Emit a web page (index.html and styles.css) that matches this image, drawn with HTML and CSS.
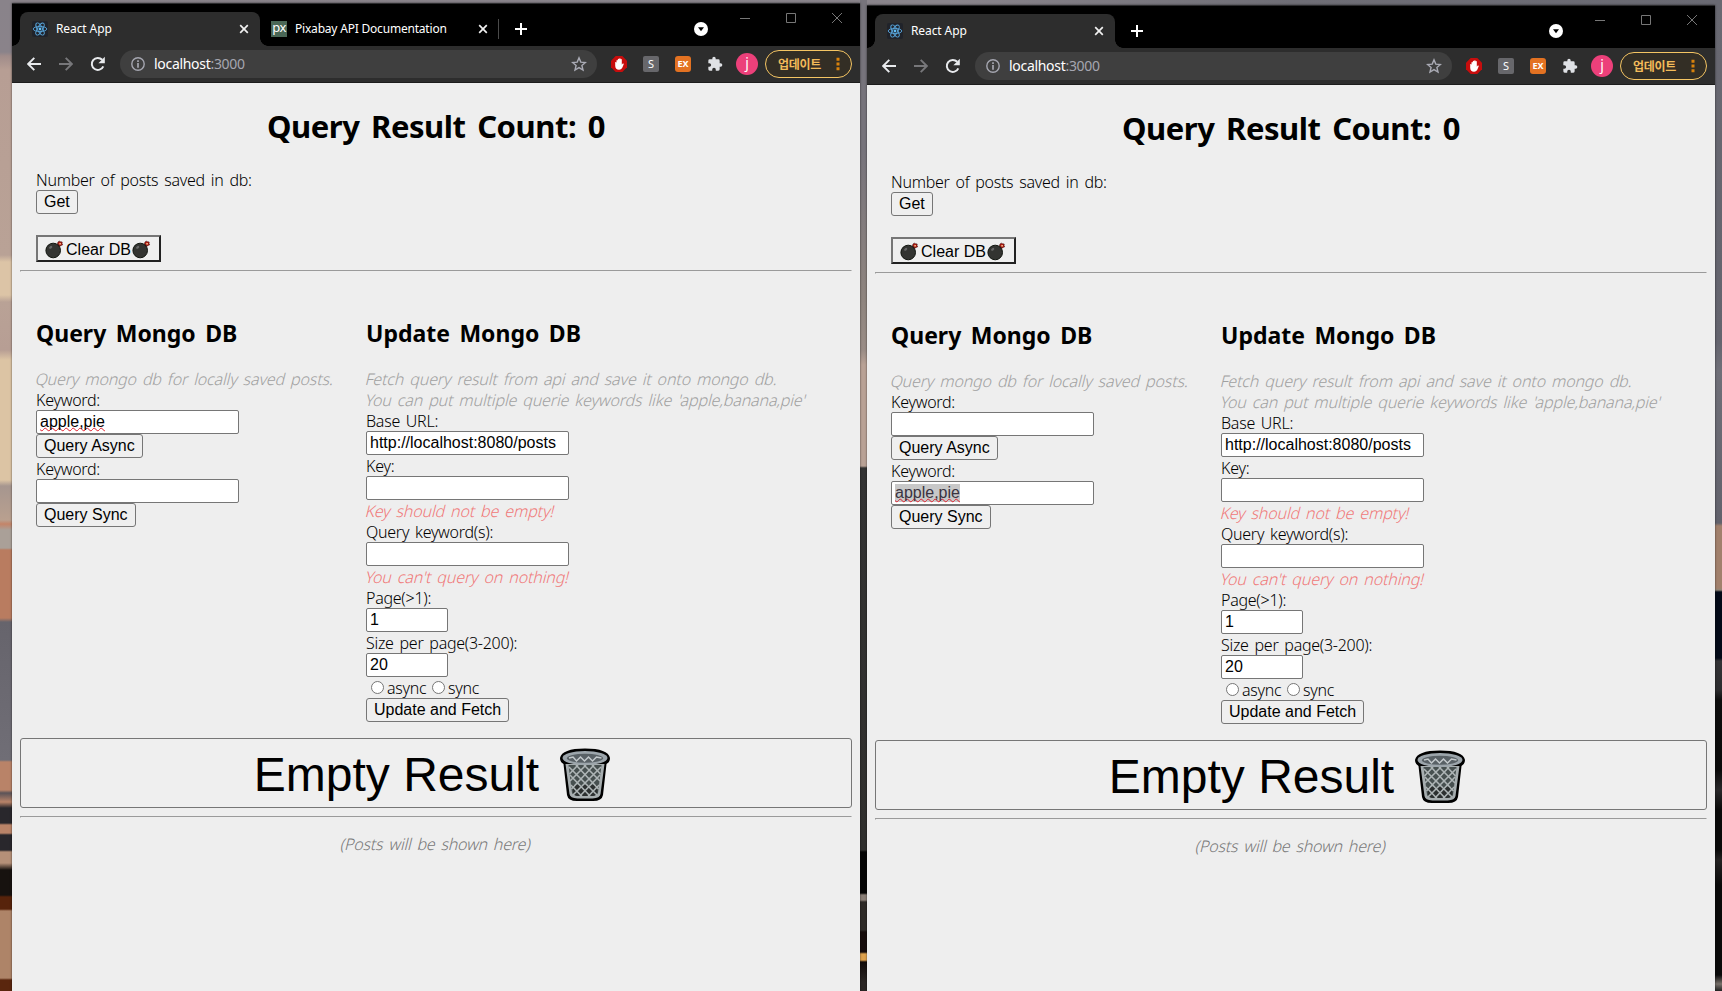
FILE: index.html
```html
<!DOCTYPE html>
<html lang="en">
<head>
<meta charset="utf-8">
<title>React App</title>
<link rel="stylesheet" href="styles.css">
</head>
<body>
<svg class="defs" width="0" height="0">
  <symbol id="react" viewBox="0 0 16 16"><rect width="16" height="16" rx="2" fill="#20232a"/><g fill="none" stroke="#58a6dc" stroke-width=".9"><ellipse cx="8" cy="8" rx="6.8" ry="2.6"/><ellipse cx="8" cy="8" rx="6.8" ry="2.6" transform="rotate(60 8 8)"/><ellipse cx="8" cy="8" rx="6.8" ry="2.6" transform="rotate(120 8 8)"/></g><circle cx="8" cy="8" r="1.4" fill="#61bdf5"/></symbol>
  <symbol id="x" viewBox="0 0 10 10"><path d="M1.2 1.2l7.6 7.6M8.8 1.2L1.2 8.8" stroke="#f1f1f1" stroke-width="1.7"/></symbol>
  <symbol id="plus" viewBox="0 0 12 12"><path d="M6 0v12M0 6h12" stroke="#fff" stroke-width="2"/></symbol>
  <symbol id="drop" viewBox="0 0 14 14"><circle cx="7" cy="7" r="7" fill="#fff"/><path d="M4 5.2h6L7 9.3z" fill="#000"/></symbol>
  <symbol id="back" viewBox="0 0 14 14"><path d="M14 7H1.5M7.3 .8L1.2 7l6.1 6.2" fill="none" stroke="currentColor" stroke-width="1.9"/></symbol>
  <symbol id="reload" viewBox="0 0 16 16"><path d="M13.3 10.3A6 6 0 1 1 12.2 3.8" fill="none" stroke="#e8eaed" stroke-width="2"/><path d="M14.8 .8v6.4H8.4z" fill="#e8eaed"/></symbol>
  <symbol id="info" viewBox="0 0 14 14"><circle cx="7" cy="7" r="6.2" fill="none" stroke="#a5a6b0" stroke-width="1.4"/><path d="M7 3.2v1.7M7 6.1v4.7" stroke="#a5a6b0" stroke-width="1.7"/></symbol>
  <symbol id="star" viewBox="0 0 16 16"><path d="M8 1.9l1.8 4.2 4.6.4-3.5 3 1.1 4.5L8 11.6 4 14l1.1-4.500L1.600 6.500l4.600-.4z" fill="none" stroke="#aaabb5" stroke-width="1.4"/></symbol>
  <symbol id="abp" viewBox="0 0 16 16"><path d="M4.7 0h6.600L16 4.700v6.600L11.300 16H4.700L0 11.300V4.700z" fill="#c70d0d"/><path d="M4.200 6.500v3.300c0 2.500 1.500 4 3.800 4 1.800 0 2.800-.9 3.500-2.500l1.300-3.200c.2-.7-.8-1-1.300-.3l-.7 1V3.600c0-.8-1.200-.8-1.200 0v-.8c0-.8-1.400-.8-1.400 0v.6c0-.8-1.400-.8-1.400 0v1.200c-.1-.8-1.300-.8-1.300 0v2.200c-.1-.9-1.300-.9-1.300-.3z" fill="#fff"/></symbol>
  <symbol id="puzzle" viewBox="0 0 24 24"><path d="M20.500 11H19V7a2 2 0 0 0-2-2h-4V3.500a2.500 2.500 0 0 0-5 0V5H4a2 2 0 0 0-2 2v3.800h1.500a2.700 2.700 0 0 1 0 5.400H2V20a2 2 0 0 0 2 2h3.800v-1.500a2.700 2.700 0 0 1 5.400 0V22H17a2 2 0 0 0 2-2v-4h1.500a2.500 2.500 0 0 0 0-5z" fill="#dfe1e5"/></symbol>
  <symbol id="dots" viewBox="0 0 4 14"><path d="M.5 .7h3v3h-3zM.5 5.500h3v3h-3zM.5 10.300h3v3h-3z" fill="#d9820c"/></symbol>
  <symbol id="bomb" viewBox="0 0 20 20"><path d="M11.500 7l3-3.500 1.500 1.500-2.500 3.500" fill="#555" stroke="#222" stroke-width=".8"/><circle cx="8.200" cy="11.500" r="7.300" fill="#333431" stroke="#11150f"/><ellipse cx="5.700" cy="8.300" rx="1.800" ry="1.200" fill="#666" transform="rotate(-40 5.700 8.300)"/><path d="M13 3l1.300-.8 1.200.6 1.700.2-.2 1.500.7 1.300-1.600.6-1.400.9-1-1.500-1.200-.8z" fill="#b51a12" stroke="#401010" stroke-width=".6"/><path d="M14.400 4h1.400v1.400h-1.400z" fill="#ffd6a0"/></symbol>
  <symbol id="bin" viewBox="0 0 52 55"><path d="M4.500 17L8 48q1 6 10 6h16q9 0 10-6l3.500-31q3.500-2 3.500-6Q49 1.500 26 1.500T1 11q0 4 3.500 6z" fill="#000"/><path d="M6.500 17L10.500 47q.5 4 8 4.500h15q7.500-.5 8-4.500l4-30z" fill="#a6adaf"/><path d="M9.500 18l3.500 28q1 2.500 6 3h14q5-.5 6-3l3.500-28z" fill="#475050"/><path d="M13 38l1.200 8q1 2.500 5 3h14q4-.5 5-3l1-8z" fill="#2c3030"/><path d="M10 20l28 28M17 18l22.500 24M25 18l16 16M33 18l8.500 9M11 28l20 21M12 38l11 11.500M42 20L14 48M35 18L12.500 42M27 18L11 34M19 18l-8.500 9M41 28L21 49M40 38L29 49.500" stroke="#adb4b5" stroke-width="1.600" fill="none"/><ellipse cx="26" cy="11" rx="22.500" ry="7" fill="#9ca5ab"/><ellipse cx="26" cy="11.300" rx="18" ry="4.500" fill="#596166"/><path d="M10 11l4-1 3.500 4 4-4 4 4 4-4 4 4 4-4 5 1" fill="none" stroke="#c3c9cc" stroke-width="1.500"/></symbol>
</svg>

<div class="wall left"></div><div class="wall middle"></div><div class="wall right"></div>

<section class="window first">
  <header class="tabs">
    <div class="tab active"><svg class="fav"><use href="#react"/></svg><span class="title">React App</span><svg class="close"><use href="#x"/></svg></div>
    <div class="tab second"><span class="px">px</span><span class="title pix">Pixabay API Documentation</span><svg class="close"><use href="#x"/></svg></div>
    <i class="sep"></i>
    <svg class="plus"><use href="#plus"/></svg>
    <div class="controls"><svg class="drop"><use href="#drop"/></svg><svg class="wc" viewBox="0 0 104 12"><path d="M1 6.500h10M47.500 1.500h9v9h-9zM93 1l10 10M103 1L93 11" fill="none" stroke="#777"/></svg></div>
  </header>
  <nav class="toolbar">
    <svg class="nav"><use href="#back"/></svg><svg class="nav fwd"><use href="#back"/></svg><svg class="reload"><use href="#reload"/></svg>
    <div class="url"><svg class="info"><use href="#info"/></svg><span class="host">localhost<span class="port">:3000</span></span><svg class="star"><use href="#star"/></svg></div>
    <div class="ext"><svg><use href="#abp"/></svg><span class="s">S</span><span class="ex">EX</span><svg><use href="#puzzle"/></svg></div>
    <span class="avatar">j</span>
    <div class="update"><span>업데이트</span><svg><use href="#dots"/></svg></div>
  </nav>
  <main class="page">
    <h1>Query Result Count: 0</h1>
    <div class="top">
      <div class="line">Number of posts saved in db:</div>
      <button class="btn">Get</button>
      <button class="clear"><svg><use href="#bomb"/></svg><span>Clear DB</span><svg><use href="#bomb"/></svg></button>
    </div>
    <hr>
    <div class="cols">
      <div class="col query">
        <h2>Query Mongo DB</h2>
        <div class="line note">Query mongo db for locally saved posts.</div>
        <div class="line">Keyword:</div>
        <div class="field"><span class="spell">apple,pie</span></div>
        <button class="btn">Query Async</button>
        <div class="line">Keyword:</div>
        <div class="field"></div>
        <button class="btn">Query Sync</button>
      </div>
      <div class="col">
        <h2>Update Mongo DB</h2>
        <div class="line note">Fetch query result from api and save it onto mongo db.</div>
        <div class="line note">You can put multiple querie keywords like 'apple,banana,pie'</div>
        <div class="line">Base URL:</div>
        <div class="field">http://localhost:8080/posts</div>
        <div class="line">Key:</div>
        <div class="field"></div>
        <div class="line error">Key should not be empty!</div>
        <div class="line">Query keyword(s):</div>
        <div class="field"></div>
        <div class="line error">You can't query on nothing!</div>
        <div class="line">Page(&gt;1):</div>
        <div class="field num">1</div>
        <div class="line">Size per page(3-200):</div>
        <div class="field num">20</div>
        <div class="line radios"><i class="radio"></i><span class="async">async</span><i class="radio"></i><span>sync</span></div>
        <button class="btn">Update and Fetch</button>
      </div>
    </div>
    <button class="empty"><span>Empty Result</span><svg><use href="#bin"/></svg></button>
    <hr>
    <p class="posts">(Posts will be shown here)</p>
  </main>
</section>

<section class="window other">
  <header class="tabs">
    <div class="tab active"><svg class="fav"><use href="#react"/></svg><span class="title">React App</span><svg class="close"><use href="#x"/></svg></div>
    <svg class="plus"><use href="#plus"/></svg>
    <div class="controls"><svg class="drop"><use href="#drop"/></svg><svg class="wc" viewBox="0 0 104 12"><path d="M1 6.500h10M47.500 1.500h9v9h-9zM93 1l10 10M103 1L93 11" fill="none" stroke="#777"/></svg></div>
  </header>
  <nav class="toolbar">
    <svg class="nav"><use href="#back"/></svg><svg class="nav fwd"><use href="#back"/></svg><svg class="reload"><use href="#reload"/></svg>
    <div class="url"><svg class="info"><use href="#info"/></svg><span class="host">localhost<span class="port">:3000</span></span><svg class="star"><use href="#star"/></svg></div>
    <div class="ext"><svg><use href="#abp"/></svg><span class="s">S</span><span class="ex">EX</span><svg><use href="#puzzle"/></svg></div>
    <span class="avatar">j</span>
    <div class="update"><span>업데이트</span><svg><use href="#dots"/></svg></div>
  </nav>
  <main class="page">
    <h1>Query Result Count: 0</h1>
    <div class="top">
      <div class="line">Number of posts saved in db:</div>
      <button class="btn">Get</button>
      <button class="clear"><svg><use href="#bomb"/></svg><span>Clear DB</span><svg><use href="#bomb"/></svg></button>
    </div>
    <hr>
    <div class="cols">
      <div class="col query">
        <h2>Query Mongo DB</h2>
        <div class="line note">Query mongo db for locally saved posts.</div>
        <div class="line">Keyword:</div>
        <div class="field"></div>
        <button class="btn">Query Async</button>
        <div class="line">Keyword:</div>
        <div class="field"><span class="spell selected">apple,pie</span></div>
        <button class="btn">Query Sync</button>
      </div>
      <div class="col">
        <h2>Update Mongo DB</h2>
        <div class="line note">Fetch query result from api and save it onto mongo db.</div>
        <div class="line note">You can put multiple querie keywords like 'apple,banana,pie'</div>
        <div class="line">Base URL:</div>
        <div class="field">http://localhost:8080/posts</div>
        <div class="line">Key:</div>
        <div class="field"></div>
        <div class="line error">Key should not be empty!</div>
        <div class="line">Query keyword(s):</div>
        <div class="field"></div>
        <div class="line error">You can't query on nothing!</div>
        <div class="line">Page(&gt;1):</div>
        <div class="field num">1</div>
        <div class="line">Size per page(3-200):</div>
        <div class="field num">20</div>
        <div class="line radios"><i class="radio"></i><span class="async">async</span><i class="radio"></i><span>sync</span></div>
        <button class="btn">Update and Fetch</button>
      </div>
    </div>
    <button class="empty"><span>Empty Result</span><svg><use href="#bin"/></svg></button>
    <hr>
    <p class="posts">(Posts will be shown here)</p>
  </main>
</section>
</body>
</html>
```

FILE: styles.css
```css
* { box-sizing: border-box; }
html, body { margin: 0; height: 100%; overflow: hidden; }
body {
  position: relative;
  background: linear-gradient(90deg, #89838a 0, #8a858c 55%, #6f6e76 75%, #6a6a73 100%);
  font-family: "Noto Sans", "Noto Sans CJK KR", sans-serif;
  color: #000;
}
svg { display: block; flex: none; }
.defs { position: absolute; }

/* wallpaper visible between the windows */
.wall { position: absolute; top: 0; bottom: 0; }
.left {
  left: 0; width: 12px;
  background: linear-gradient(#89838a 0, #8a838a 52px, #a08c8a 56px, #b79e94 70px, #b9a296 255px, #dcc4a6 262px, #dcc4a6 295px, #b9a296 302px, #b79e94 350px, #dcc4a4 360px, #dcc4a4 480px, #a6968f 486px, #b9a08f 520px, #c48468 524px, #aaa098 530px, #aaa098 548px, #b97c60 550px, #b97c60 618px, #66646c 622px, #706e76 760px, #b98368 762px, #b98368 790px, #5b5358 793px, #b98368 802px, #29272c 808px, #29272c 823px, #b98368 825px, #b98368 833px, #29272c 835px, #29272c 850px, #b59078 852px, #b59078 863px, #17120f 870px, #17120f 895px, #57230b 897px, #57230b 909px, #ae8468 911px, #ae8468 978px, #5a260e 980px);
}
.middle {
  left: 860px; width: 7px;
  background: linear-gradient(#77747c 0, #77747c 150px, #8f857f 300px, #9a8d86 350px, #b9a296 365px, #b9a296 466px, #333 468px, #31302e 850px, #050505 852px, #050505 893px, #8b8078 895px, #8b8078 900px, #2f2b28 902px, #2f2b28 930px, #170d0c 932px, #170d0c 952px, #dfa24e 954px, #dfa24e 960px, #120c0a 962px, #2a2624 982px);
}
.right {
  left: 1715px; right: 0;
  background: linear-gradient(#696972 0, #64646e 340px, #6f6f78 370px, #62626c 523px, #a1806c 526px, #a1806c 588px, #8f8578 590px, #030a18 592px, #030a18 658px, #333336 661px, #2c2c2e 690px, #0e0e0e 700px, #0a0a0a 770px, #29282a 790px, #0a0a0a 810px, #0a0a0a 850px, #242222 860px, #0a0a0a 885px, #0a0a0a 975px, #77706a 984px, #222 991px);
}

.window { position: absolute; width: 848px; bottom: 0; background: #eee; box-shadow: 0 0 2px rgba(0,0,0,.6); overflow: hidden; }
.first { left: 12px; top: 3px; }
.other { left: 867px; top: 5px; }

.tabs { height: 43px; background: #000; border-top: 1px solid #2c2c2e; display: flex; padding: 8px 12px 0 8px; }
.tab { height: 34px; display: flex; align-items: center; color: #fff; font-size: 12px; padding-bottom: 1px; }
.active { position: relative; width: 240px; padding: 0 11px 1px 12px; background: #2d2d2d; border-radius: 8px 8px 0 0; }
.active::before, .active::after { content: ""; position: absolute; bottom: 0; width: 8px; height: 8px; }
.active::before { left: -8px; background: radial-gradient(circle at 0 0, #000 7.500px, #2d2d2d 8px); }
.active::after { right: -8px; background: radial-gradient(circle at 100% 0, #000 7.500px, #2d2d2d 8px); }
.fav { width: 16px; height: 16px; }
.title { margin-left: 8px; white-space: nowrap; letter-spacing: -.1px; }
.pix { letter-spacing: -.2px; }
.close { width: 10px; height: 10px; margin-left: auto; }
.second { width: 238px; padding: 0 10px 1px 11px; }
.px { width: 16px; height: 16px; background: #4a6756; color: #fff; font-size: 13px; line-height: 12px; text-align: center; letter-spacing: -.5px; }
.sep { width: 1px; height: 20px; background: #4a4a4a; margin-top: 7px; }
.plus { width: 12px; height: 12px; margin: 11px 0 0 16px; }
.controls { margin-left: auto; display: flex; }
.drop { width: 14px; height: 14px; margin: 10px 31px 0 0; }
.wc { width: 104px; height: 12px; margin: 0 5px 0 0; }

.toolbar { height: 37px; background: #2d2d2d; border-bottom: 1px solid #1c1c1c; display: flex; align-items: center; padding: 0 8px 0 15px; }
.nav { width: 14px; height: 14px; color: #e8eaed; }
.fwd { color: #77777a; transform: scaleX(-1); margin-left: 18px; }
.reload { width: 16px; height: 16px; margin: 0 14px 0 17px; }
.url { width: 477px; height: 28px; border-radius: 14px; background: #3f3f3f; display: flex; align-items: center; padding: 0 10px 0 11px; }
.info { width: 14px; height: 14px; }
.host { color: #fff; font-size: 14px; line-height: 20px; margin: 0 0 1px 9px; letter-spacing: -.3px; }
.port { color: #a5a6b0; }
.star { width: 16px; height: 16px; margin-left: auto; }
.ext { display: flex; gap: 16px; margin-left: 14px; }
.ext svg, .s, .ex { width: 16px; height: 16px; }
.s, .ex { border-radius: 2px; background: #67676b; color: #fff; font-size: 11px; line-height: 16px; text-align: center; }
.ex { background: #e37222; border-radius: 3px; font-size: 9px; font-weight: 700; }
.avatar { width: 22px; height: 22px; margin-left: 13px; border-radius: 50%; background: #ec407a; color: #fff; font-size: 14px; line-height: 20px; text-align: center; }
.update { width: 87px; height: 28px; margin-left: auto; border: 1px solid #f5c563; border-radius: 14px; background: #332e25; color: #f3bb5a; display: flex; align-items: center; padding: 0 11px 1px 12px; font-size: 12px; font-weight: 700; }
.update span { font-family: "Noto Sans CJK KR", sans-serif; letter-spacing: -.3px; white-space: nowrap; line-height: 16px; }
.update svg { width: 4px; height: 14px; margin-left: auto; }

.page { padding: 21px 8px 0; }
h1, h2 { font-weight: 700; margin: 0; white-space: nowrap; }
h1 { font-size: 31px; line-height: 43px; height: 43px; padding-top: 1px; text-align: center; letter-spacing: -.45px; word-spacing: 4px; margin-bottom: 22px; }
h2 { font-size: 23px; line-height: 32px; height: 32px; padding-top: 1px; word-spacing: 3.500px; margin-bottom: 20px; }
.top { padding-left: 16px; display: flex; flex-direction: column; align-items: flex-start; }
.line { height: 21px; line-height: 21px; padding-top: 1px; font-size: 16px; font-weight: 350; letter-spacing: -.27px; word-spacing: 2px; white-space: nowrap; }
.note { color: #a0a0a0; letter-spacing: -.13px; }
.error { color: #f07878; letter-spacing: -.13px; }
.note, .error { transform: skewX(-14deg); }
.btn { height: 24px; padding: 0 7px; font: 16px/20px "Liberation Sans", Arial, sans-serif; color: #000; background: #efefef; border: 1px solid #767676; border-radius: 3px; }
.clear { width: 125px; height: 27px; margin-top: 21px; padding: 1px 0 0; border: 2px solid; border-color: #767676 #212121 #212121 #767676; background: #efefef; color: #000; font: 16px/21px "Liberation Sans", Arial, sans-serif; display: flex; align-items: center; justify-content: center; gap: 1px; }
.clear svg { width: 20px; height: 20px; }
hr { height: 2px; margin: 8px 0; border: 1px solid; border-color: #9a9a9a #eee #eee #9a9a9a; }
.cols { display: flex; padding: 36px 16px 0; }
.col { display: flex; flex-direction: column; align-items: flex-start; }
.query { width: 330px; }
.field { width: 203px; height: 24px; padding: 0 3px; background: #fff; border: 1px solid #767676; border-radius: 2px; font: 16px/21px "Liberation Sans", Arial, sans-serif; white-space: nowrap; }
.num { width: 82px; }
.spell { text-decoration: underline wavy #e0202e 1px; text-underline-offset: 0; text-decoration-skip-ink: none; }
.selected { background: #c8c8c8; color: #3a3340; display: inline-block; height: 18px; line-height: 18px; margin-top: 1px; }
.radios { display: flex; padding-left: 5px; }
.radio { width: 13px; height: 13px; margin: 3px 3px 0 0; border: 1px solid #767676; border-radius: 50%; background: #fff; }
.async { width: 45px; }
.empty { width: 100%; height: 70px; margin: 16px 0 0; padding: 3px 7px 0 0; display: flex; justify-content: center; align-items: center; gap: 20px; background: #efefef; border: 1px solid #767676; border-radius: 3px; color: #000; font: 48px/60px "Liberation Sans", Arial, sans-serif; }
.empty svg { width: 52px; height: 55px; }
.posts { margin: 16px 0; text-align: center; color: #787878; font-size: 16px; font-weight: 350; line-height: 21px; letter-spacing: -.2px; word-spacing: 2px; transform: skewX(-14deg); }
```
